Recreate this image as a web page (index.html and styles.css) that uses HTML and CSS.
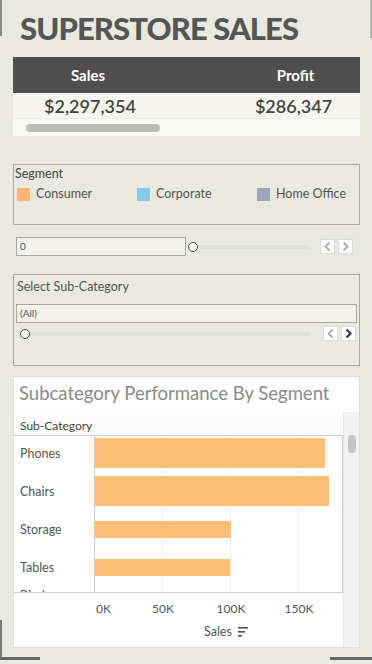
FILE: index.html
```html
<!DOCTYPE html>
<html>
<head>
	<title>Superstore Sales</title>
	<link rel="stylesheet" href="styles.css">
</head>
<body>
<div class="frameTL"></div>
<div class="frameTR"></div>
<div class="frameBL"></div>
<div class="frameBR"></div>

<div class="dash">
	<h1 class="dashTitle">SUPERSTORE SALES</h1>

	<div class="kpi">
		<div class="kpiHead">
			<span class="kpiSales">Sales</span>
			<span class="kpiProfit">Profit</span>
		</div>
		<div class="kpiRow">
			<span class="kpiSales">$2,297,354</span>
			<span class="kpiProfit">$286,347</span>
		</div>
		<div class="kpiScroll"><div class="kpiThumb"></div></div>
	</div>

	<div class="filterBox segBox">
		<div class="filterTitle segTitle">Segment</div>
		<div class="legend">
			<div class="legendItem"><span class="swatch consumer"></span>Consumer</div>
			<div class="legendItem"><span class="swatch corporate"></span>Corporate</div>
			<div class="legendItem"><span class="swatch home"></span>Home Office</div>
		</div>
	</div>

	<div class="sliderRow">
		<div class="sliderInput shortInput">0</div>
		<div class="track shortTrack"><span class="knob"></span></div>
		<div class="stepBtns">
			<span class="stepBtn"><svg width="9" height="11" viewBox="0 0 9 11"><polyline points="6.5,1.5 2.5,5.5 6.5,9.5" fill="none" stroke="#a9b0bd" stroke-width="2"/></svg></span>
			<span class="stepBtn"><svg width="9" height="11" viewBox="0 0 9 11"><polyline points="2.5,1.5 6.5,5.5 2.5,9.5" fill="none" stroke="#a9b0bd" stroke-width="2"/></svg></span>
		</div>
	</div>

	<div class="filterBox subBox">
		<div class="filterTitle">Select Sub-Category</div>
		<div class="sliderInput wideInput">(All)</div>
		<div class="sliderRow subSlider">
			<div class="track longTrack"><span class="knob"></span></div>
			<div class="stepBtns">
				<span class="stepBtn"><svg width="9" height="11" viewBox="0 0 9 11"><polyline points="6.5,1.5 2.5,5.5 6.5,9.5" fill="none" stroke="#a9b0bd" stroke-width="2"/></svg></span>
				<span class="stepBtn"><svg width="9" height="11" viewBox="0 0 9 11"><polyline points="2.5,1.5 6.5,5.5 2.5,9.5" fill="none" stroke="#2f3b52" stroke-width="2.2"/></svg></span>
			</div>
		</div>
	</div>

	<div class="chartPanel">
		<div class="chartTitle">Subcategory Performance By Segment</div>
		<div class="chartBody">
			<div class="chartMain">
				<div class="colHead">Sub-Category</div>
				<div class="plot">
					<div class="grid"></div>
					<div class="rows">
						<div class="row"><span class="rowLabel">Phones</span><span class="bar tall" style="width:230px"></span></div>
						<div class="row"><span class="rowLabel">Chairs</span><span class="bar tall" style="width:234px"></span></div>
						<div class="row"><span class="rowLabel">Storage</span><span class="bar" style="width:136px"></span></div>
						<div class="row"><span class="rowLabel">Tables</span><span class="bar" style="width:135px"></span></div>
						<div class="row lastRow"><span class="rowLabel">Binders</span></div>
					</div>
				</div>
				<div class="axis">
					<span class="tick" style="left:82px">0K</span>
					<span class="tick mid" style="left:149px">50K</span>
					<span class="tick mid" style="left:217px">100K</span>
					<span class="tick mid" style="left:285px">150K</span>
					<div class="axisName">Sales
						<svg width="11" height="11" viewBox="0 0 11 11"><rect x="0" y="1" width="10" height="1.6" fill="#555"/><rect x="0" y="5" width="7" height="1.6" fill="#555"/><rect x="0" y="9" width="4" height="1.6" fill="#555"/></svg>
					</div>
				</div>
			</div>
			<div class="gutter"><div class="gutterThumb"></div></div>
		</div>
	</div>
</div>
</body>
</html>
```
FILE: styles.css
```css
body {
	margin: 0;
	background: #e9e9e0;
	font-family: Lato, "Open Sans", sans-serif;
	color: #555;
	width: 372px;
	height: 664px;
	overflow: hidden;
	position: relative;
}

.frameTL {position: absolute; left: 0; top: 0; width: 2px; height: 36px; background: #8a8a86;}
.frameTR {position: absolute; right: 0; top: 0; width: 2px; height: 38px; background: #b8b8b2;}
.frameBL {position: absolute; left: 0; bottom: 4px; width: 40px; height: 40px; border-left: 2px solid #777; border-bottom: 3px solid #666; box-sizing: border-box;}
.frameBR {position: absolute; right: 0; bottom: 4px; width: 42px; height: 3px; background: #666;}

.dash {padding: 0 12px 0 13px;}

.dashTitle {
	margin: 0;
	padding: 7px 0 0 7px;
	height: 50px;
	font-size: 31px;
	line-height: 42px;
	font-weight: 900;
	color: #555;
	letter-spacing: -0.9px;
}

/* kpi table */
.kpiHead, .kpiRow {display: flex;}
.kpiHead {background: #4f4f4f; color: #fff; height: 36px; align-items: center; font-weight: bold; font-size: 15px;}
.kpiRow {background: #f6f6ee; height: 25px; align-items: center; font-size: 18px; font-weight: 600; color: #444; border-bottom: 1px solid #ececE4;}
.kpiSales {width: 150px; text-align: center;}
.kpiProfit {flex: 1; text-align: center; padding-left: 68px;}
.kpiRow .kpiSales {padding-left: 2px;}
.kpiRow .kpiProfit {padding-left: 62px;}
.kpiScroll {background: #f8f8f5; height: 17px; display: flex; align-items: center; padding-left: 13px;}
.kpiThumb {width: 134px; height: 8px; border-radius: 4px; background: #bcbcbc;}

/* filters */
.filterBox {border: 1px solid #a9a9a1; box-sizing: border-box;}
.segBox {margin-top: 28px; height: 61px; padding: 1px 0 0 1px;}
.filterTitle {font-size: 12.5px; color: #444; line-height: 16px;}
.legend {display: flex; margin-top: 4px;}
.legendItem {width: 120px; flex-shrink: 0; display: flex; align-items: center; font-size: 12.5px; color: #555; line-height: 16px;}
.legendItem:first-child {padding-left: 2px; width: 120px;}
.legendItem:last-child {width: auto;}
.swatch {width: 13px; height: 13px; margin-right: 6px;}
.consumer {background: #ffb670;}
.corporate {background: #88c9ea;}
.home {background: #9ba7b8;}

.sliderRow {display: flex; align-items: center; margin-top: 12px; height: 19px;}
.sliderInput {background: #f2f2ea; border: 1px solid #a9a9a1; box-sizing: border-box; height: 19px; font-size: 10px; line-height: 17px; padding-left: 3px; color: #555;}
.shortInput {width: 170px; margin-left: 3px;}
.track {position: relative; height: 4px; background: #e1e1dc; border-radius: 2px;
	background-image: repeating-linear-gradient(90deg, transparent 0 27px, #c6c6c0 27px 28px);
	background-size: 100% 3px; background-position: 0 7px; background-repeat: no-repeat;
}
.track {background-color: #e1e1dc; overflow: visible;}
.shortTrack {margin-left: 7px; width: 118px;}
.knob {position: absolute; left: -5px; top: -3px; width: 8px; height: 8px; border: 1px solid #444; border-radius: 50%; background: #fff;}
.stepBtns {display: flex; gap: 3px; margin-left: 9px;}
.stepBtn {width: 15px; height: 15px; box-sizing: border-box; background: #fff; border: 1px solid #dcdcd8; display: flex; align-items: center; justify-content: center;}

.subBox {margin-top: 18px; height: 92px; padding: 4px 2px 0 2px;}
.subBox .filterTitle {padding-left: 1px; color: #555;}
.wideInput {margin-top: 9px; width: 341px;}
.subSlider {margin-top: 0; padding-left: 9px; height: 21px;}
.subSlider .stepBtns {margin-left: 13px;}
.longTrack {width: 285px; background-image: repeating-linear-gradient(90deg, transparent 0 16px, #c6c6c0 16px 17px);}

/* chart */
.chartPanel {margin-top: 10px; background: #fff; border: 1px solid #dedede; width: 347px; height: 272px; box-sizing: border-box;}
.chartTitle {height: 35px; font-size: 18.5px; color: #8a8a8a; line-height: 32px; padding-left: 5px;}
.chartBody {display: flex; height: 235px;}
.chartMain {width: 329px; background: #fff;}
.colHead {height: 23px; background: #fbfbfb; font-size: 12px; color: #444; line-height: 27px; padding-left: 6px;}
.plot {position: relative; height: 158px; border-top: 1px solid #cfcfcf; border-bottom: 1px solid #cfcfcf; border-right: 1px solid #cfcfcf; overflow: hidden; box-sizing: border-box;}
.grid {position: absolute; left: 80px; top: 0; bottom: 0; width: 248px; border-left: 1px solid #cfcfcf;
	background-image: repeating-linear-gradient(90deg, transparent 0 67px, #efefef 67px 68px);}
.rows {position: relative; margin-top: -2px;}
.row {height: 38px; display: flex; align-items: center;}
.rowLabel {width: 81px; padding-left: 6px; box-sizing: border-box; font-size: 12.5px; color: #555;}
.bar {height: 17px; background: #ffbe75;}
.bar.tall {height: 30px;}
.lastRow {align-items: flex-start; padding-top: 2px; box-sizing: border-box;}

.axis {position: relative; height: 54px;}
.tick {position: absolute; top: 8px; font-size: 12px; color: #555; line-height: 16px;}
.tick.mid {transform: translateX(-50%);}
.axisName {position: absolute; left: 190px; top: 31px; font-size: 12.5px; color: #555; display: flex; align-items: center; gap: 6px;}

.gutter {flex: 1; background: #f2f2f2; border-left: 1px solid #e4e4e4;}
.gutterThumb {margin: 23px 0 0 4px; width: 8px; height: 18px; border-radius: 4px; background: #c4c4c4;}
```
